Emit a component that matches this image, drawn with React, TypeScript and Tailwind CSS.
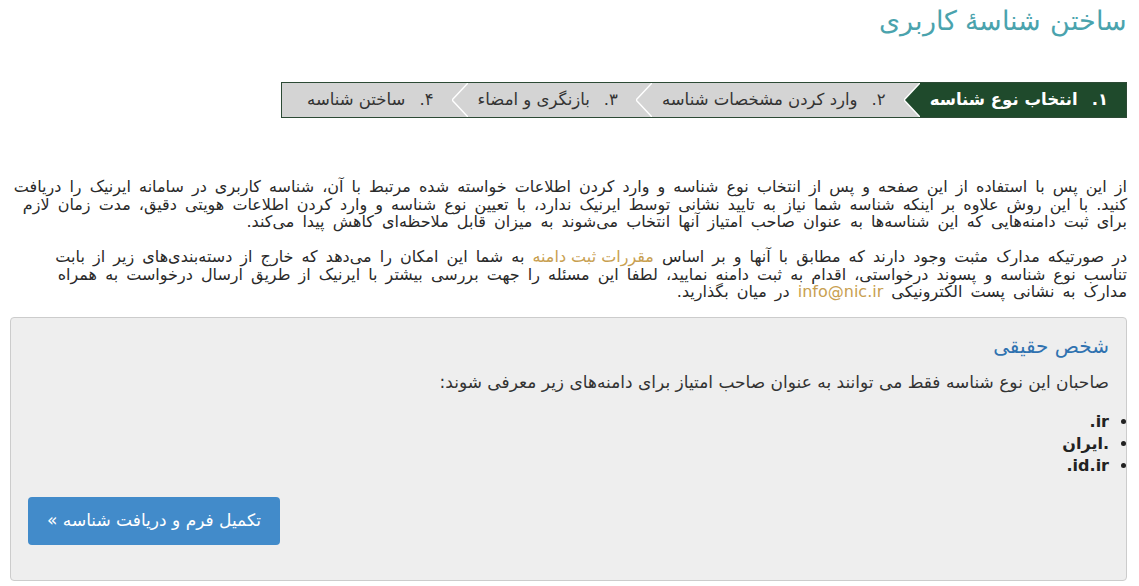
import React from 'react'

const steps = [
  { n: '۱.', label: 'انتخاب نوع شناسه', active: true },
  { n: '۲.', label: 'وارد کردن مشخصات شناسه', active: false },
  { n: '۳.', label: 'بازنگری و امضاء', active: false },
  { n: '۴.', label: 'ساختن شناسه', active: false },
]

function Arrow({ fill, next }: { fill: string; next: string }) {
  return (
    <svg width="16" height="34" viewBox="0 0 16 34" className="block shrink-0" style={{ background: next }}>
      <polygon points="16,0 0,17 16,34" fill={fill} />
      <polyline points="16,0 0,17 16,34" fill="none" stroke="#ffffff" strokeWidth="1.5" />
    </svg>
  )
}

export default function App() {
  return (
    <div dir="rtl" className="min-h-screen bg-white pl-[10px] pr-[12px] text-[#333] font-['DejaVu_Sans',sans-serif]">
      {/* Title */}
      <h1 className="pt-[5px] h-[82px] text-[27px] font-light leading-[32px] text-[#4aa3ad]">ساختن شناسهٔ کاربری</h1>

      {/* Steps */}
      <div className="flex w-[846px] h-[36px] border border-[#2c4a35] bg-[#d4d4d4]">
        {steps.map((s, i) => (
          <div key={i} className="flex items-stretch">
            <div
              className={`flex items-center gap-[14px] pr-[18px] pl-[10px] text-[16.5px] ${
                s.active ? 'bg-[#1f4a2c] text-white font-bold' : 'text-[#333]'
              }`}
            >
              <span>{s.n}</span>
              <span>{s.label}</span>
            </div>
            {i < steps.length - 1 && (
              <Arrow fill={s.active ? '#1f4a2c' : '#d4d4d4'} next="#d4d4d4" />
            )}
          </div>
        ))}
      </div>

      {/* Intro */}
      <div className="mt-[60px] text-[16px] leading-[17.5px] text-[#2a2a2a] [word-spacing:3px]">
        <p>
          از این پس با استفاده از این صفحه و پس از انتخاب نوع شناسه و وارد کردن اطلاعات خواسته شده مرتبط با آن، شناسه کاربری در سامانه ایرنیک را دریافت کنید. با این روش علاوه بر اینکه شناسه شما نیاز به تایید نشانی توسط ایرنیک ندارد، با تعیین نوع شناسه و وارد کردن اطلاعات هویتی دقیق، مدت زمان لازم برای ثبت دامنه‌هایی که این شناسه‌ها به عنوان صاحب امتیاز آنها انتخاب می‌شوند به میزان قابل ملاحظه‌ای کاهش پیدا می‌کند.
        </p>
        <p className="mt-[17.5px]">
          در صورتیکه مدارک مثبت وجود دارند که مطابق با آنها و بر اساس{' '}
          <a className="text-[#c8a050] [word-spacing:0px]">مقررات ثبت دامنه</a> به شما این امکان را می‌دهد که خارج از دسته‌بندی‌های زیر از بابت تناسب نوع شناسه و پسوند درخواستی، اقدام به ثبت دامنه نمایید، لطفا این مسئله را جهت بررسی بیشتر با ایرنیک از طریق ارسال درخواست به همراه مدارک به نشانی پست الکترونیکی{' '}
          <a className="text-[#c8a050]">info@nic.ir</a> در میان بگذارید.
        </p>
      </div>

      {/* Panel */}
      <div className="mt-[16px] rounded-[4px] border border-[#cccccc] bg-[#eeeeee] px-[17px] pt-[16px] pb-[35px]">
        <h3 className="text-[20px] leading-[24px] text-[#2f72b0]">شخص حقیقی</h3>
        <p className="mt-[13px] text-[17px] leading-[22px]">صاحبان این نوع شناسه فقط می توانند به عنوان صاحب امتیاز برای دامنه‌های زیر معرفی شوند:</p>
        <ul className="mt-[18px] list-disc font-bold text-[16px] leading-[22px] text-[#222]">
          <li><span dir="ltr">.ir</span></li>
          <li>.ایران</li>
          <li><span dir="ltr">.id.ir</span></li>
        </ul>
        <div className="mt-[20px] flex justify-end">
          <button className="h-[48px] rounded-[4px] bg-[#428bca] px-[19px] text-[17px] text-white">
            تکمیل فرم و دریافت شناسه »
          </button>
        </div>
      </div>
    </div>
  )
}
